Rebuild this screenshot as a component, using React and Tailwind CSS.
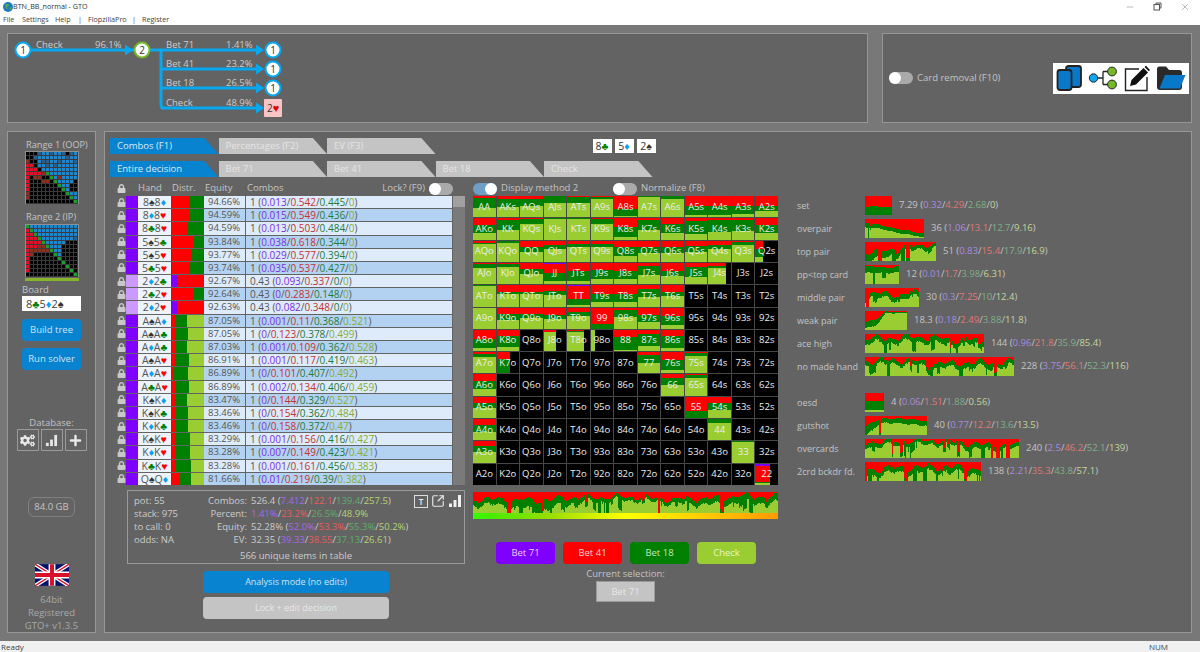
import { Minus, X, SquareArrowOutUpRight } from "lucide-react";
import { FaCogs, FaLock, FaPlus } from "react-icons/fa";

const PURPLE = "#8000ff";
const RED = "#ff0000";
const GREEN = "#008000";
const LIME = "#9acd32";

const SUIT_COLORS = { "♠": "#333333", "♦": "#0a9ff0", "♥": "#ff0000", "♣": "#008000" };

// hand, equity, total combos, then bet 71 / bet 41 / bet 18 / check
const TABLE_ROWS = [
  ["8♠8♦", "94.66%", "1", ["0.013", "0.542", "0.445", "0"]],
  ["8♦8♥", "94.59%", "1", ["0.015", "0.549", "0.436", "0"]],
  ["8♣8♥", "94.59%", "1", ["0.013", "0.503", "0.484", "0"]],
  ["5♠5♣", "93.84%", "1", ["0.038", "0.618", "0.344", "0"]],
  ["5♠5♥", "93.77%", "1", ["0.029", "0.577", "0.394", "0"]],
  ["5♣5♥", "93.74%", "1", ["0.035", "0.537", "0.427", "0"]],
  ["2♦2♣", "92.67%", "0.43", ["0.093", "0.337", "0", "0"]],
  ["2♣2♥", "92.64%", "0.43", ["0", "0.283", "0.148", "0"]],
  ["2♦2♥", "92.63%", "0.43", ["0.082", "0.348", "0", "0"]],
  ["A♠A♦", "87.05%", "1", ["0.001", "0.11", "0.368", "0.521"]],
  ["A♠A♣", "87.05%", "1", ["0", "0.123", "0.378", "0.499"]],
  ["A♦A♣", "87.03%", "1", ["0.001", "0.109", "0.362", "0.528"]],
  ["A♠A♥", "86.91%", "1", ["0.001", "0.117", "0.419", "0.463"]],
  ["A♦A♥", "86.89%", "1", ["0", "0.101", "0.407", "0.492"]],
  ["A♣A♥", "86.89%", "1", ["0.002", "0.134", "0.406", "0.459"]],
  ["K♠K♦", "83.47%", "1", ["0", "0.144", "0.329", "0.527"]],
  ["K♠K♣", "83.46%", "1", ["0", "0.154", "0.362", "0.484"]],
  ["K♦K♣", "83.46%", "1", ["0", "0.158", "0.372", "0.47"]],
  ["K♠K♥", "83.29%", "1", ["0.001", "0.156", "0.416", "0.427"]],
  ["K♦K♥", "83.28%", "1", ["0.007", "0.149", "0.423", "0.421"]],
  ["K♣K♥", "83.28%", "1", ["0.001", "0.161", "0.456", "0.383"]],
  ["Q♠Q♦", "81.66%", "1", ["0.01", "0.219", "0.39", "0.382"]],
];

// strategy matrix: [red, green, width, purple], null for hands not in range
const n = null;
const MATRIX = [
  [[.1, .45], [.15, .35], [.15, .3], [0, .35], [.05, .3], [.05, .1], [.6, .35], [.02, .05], [.02, .12], [.45, .45], [.45, .45], [.45, .4], [.45, .25]],
  [[.3, .4], [.1, .45], [.05, .2], [0, .05], [0, .05], [.05, .2], [.4, .5], [.1, .45], [.25, .45], [.15, .6], [.1, .55], [.1, .5], [.3, .4]],
  [[.1, .05], [0, .1], [.3, .25], [.2, .2], [.15, .15], [.15, .15], [.3, .4], [.3, .3], [.3, .3], [.25, .3], [.2, .2], [.05, .15], [.4, .35, .33]],
  [[.05, .2], [.05, .15], [.3, .2], [.45, .35, 1, .04], [.4, .45], [.35, .4], [.4, .35], [.15, .4], [.4, .2], [.2, .45], [.15, .1, .8], n, n],
  [[0, .05], [.3, .1], [.3, .1], [.25, .2], [.6, .3, 1, .04], [.4, .4], [.4, .4], [.2, .35], [.3, .2], n, n, n, n],
  [[0, 0], [.3, .3], [.3, .2], [.35, .2], [.2, .2], [.75, .25, 1, .03], [.1, .35], [.35, .35], [.4, .4], n, n, n, n],
  [[.45, .4], [.3, .5], n, [.1, 0, .55], [.05, .05, .75], [0, 0, .2], [.35, .6], [.2, .55], [.3, .55], n, n, n, n],
  [[.1, .15], [.3, .7, .6], n, n, n, n, n, [.15, .35], [.35, .5], [.02, .15], n, n, n],
  [[.3, .4], n, n, n, n, n, n, n, [.15, .35], [.02, .15], n, n, n],
  [[.3, .25], n, n, n, n, n, n, n, n, [.65, .35], [.3, .3], n, n],
  [[.3, .3], n, n, n, n, n, n, n, n, n, [0, .2], n, n],
  [[.2, .3], n, n, n, n, n, n, n, n, n, n, [0, .05], n],
  [n, n, n, n, n, n, n, n, n, n, n, n, [.75, .08, .65, .1]],
];
const RANKS = "AKQJT98765432";

const RANGE_COLORS = { k: "#000000", b: "#1f86cc", d: "#2d5f8c", r: "#e0102a", m: "#8a3020", g: "#1f9a30" };
const RANGE_1 = [
  "kkkdbbdbbdkdb", "kkdbbbbbbbdbb", "mkkbddbbdbbbd", "rrkbbdbdbbbbb", "rrrkbbbbbbbbb",
  "rrrrmgbbbbbbb", "rkmmkkgbmbbbb", "rkkkmmkgbbbbk", "rkkkkkkkgbbkk", "rkkkkkkkkgbkk",
  "mkkkkkkkkkgbb", "mkkkkkkkkkkgb", "kkkkkkkkkkkkg",
];
const RANGE_2 = [
  "gbbbbbbbbbbbb", "rgbbbbbbbbbbb", "rrgbbbbbbbbbb", "rrrgbbbbbbbbd", "rrrrgbbbbbkkk",
  "rrrmmgbbbkkkk", "rmmmmmgbbkkkk", "rmkkkkkgbkkkk", "rkkkkkkkgkkkk", "rkkkkkkkkgkkk",
  "rkkkkkkkkkgkk", "rkkkkkkkkkkgk", "kkkkkkkkkkkkg",
];

const CATEGORIES = [
  { name: "set", w: 27, red: [.56, .55, .6], green: [1, 1, 1], rough: .1, seed: 11, vals: ["7.29", "0.32", "4.29", "2.68", "0"] },
  { name: "overpair", w: 59, red: [.2, .35, .6, .75], green: [.45, .55, .8, .95], rough: .2, seed: 23, vals: ["36", "1.06", "13.1", "12.7", "9.16"] },
  { name: "top pair", w: 71, red: [.55, .5, .3, .2, .1], green: [1, .85, .55, .4, .3], rough: .9, seed: 37, vals: ["51", "0.83", "15.4", "17.9", "16.9"] },
  { name: "pp<top card", w: 34, red: [.1, .1, .1], green: [.45, .4, .4], rough: .3, seed: 41, vals: ["12", "0.01", "1.7", "3.98", "6.31"] },
  { name: "middle pair", w: 54, red: [.35, .3, .35, .2], green: [.55, .55, .6, .45], rough: 1.2, seed: 53, vals: ["30", "0.3", "7.25", "10", "12.4"] },
  { name: "weak pair", w: 42, red: [.55, .45, .05, .05, .05], green: [.85, .8, .12, .12, .1], rough: .2, seed: 67, vals: ["18.3", "0.18", "2.49", "3.88", "11.8"] },
  { name: "ace high", w: 119, red: [.25, .2, .15, .3, .3], green: [.5, .45, .4, .55, .55], rough: 1.1, seed: 71, vals: ["144", "0.96", "21.8", "35.9", "85.4"] },
  { name: "no made hand", w: 149, red: [.2, .15, .35, .3, .25], green: [.45, .35, .6, .55, .5], rough: 1.1, seed: 83, vals: ["228", "3.75", "56.1", "52.3", "116"] },
  { gap: true, name: "oesd", w: 19, red: [.4, .4], green: [.88, .88], rough: 0, seed: 97, vals: ["4", "0.06", "1.51", "1.88", "0.56"] },
  { name: "gutshot", w: 62, red: [.5, .15, .1, .2, .25], green: [1, .4, .35, .45, .5], rough: .3, seed: 101, vals: ["40", "0.77", "12.2", "13.6", "13.5"] },
  { name: "overcards", w: 154, red: [.15, .12, .08, .3, .3], green: [.4, .3, .25, .55, .5], rough: 1, seed: 113, vals: ["240", "2.5", "46.2", "52.1", "139"] },
  { name: "2crd bckdr fd.", w: 116, red: [.4, .3, .25, .35], green: [.7, .55, .5, .65], rough: 1.2, seed: 127, vals: ["138", "2.21", "35.3", "43.8", "57.1"] },
];

function lerpPoints(points, t) {
  const pos = t * (points.length - 1);
  const i = Math.min(Math.floor(pos), points.length - 2);
  return points[i] + (points[i + 1] - points[i]) * (pos - i);
}

// area chart of the strategy per hand, drawn one pixel column at a time
function Chart({ w, h = 19, red, green, rough = 0, seed = 1 }) {
  let s = seed * 7919;
  const rnd = () => {
    s = (s * 16807) % 2147483647;
    return s / 2147483647;
  };
  const p1 = rnd() * 6.28;
  const p2 = rnd() * 6.28;
  let redPath = "";
  let greenPath = "";
  let spike = 0;
  let left = 0;
  let redSpike = false;
  for (let x = 0; x < w; x++) {
    const t = x / Math.max(w - 1, 1);
    if (left === 0 && rnd() < rough * 0.13) {
      left = 1 + Math.floor(rnd() * 4);
      spike = rnd() * 0.8;
      redSpike = rnd() < 0.35;
    }
    const wave = (Math.sin(x / 5 + p1) + Math.sin(x / 2.3 + p2)) * rough * 0.09;
    const noise = (rnd() - 0.5) * rough * 0.08 + wave;
    const dip = left > 0 ? spike : 0;
    if (left > 0) left--;
    const r = Math.min(Math.max(lerpPoints(red, t) + noise + (redSpike ? dip : 0), 0), 1) * h;
    const g = Math.min(Math.max(lerpPoints(green, t) + noise + dip, 0), 1) * h;
    redPath += `M${x} 0h1V${r}h-1z`;
    greenPath += `M${x} ${r}h1V${Math.max(g, r)}h-1z`;
  }
  return (
    <svg width={w} height={h} className="block shrink-0" shapeRendering="crispEdges">
      <rect width={w} height={h} fill={LIME} />
      <path d={greenPath} fill={GREEN} />
      <path d={redPath} fill={RED} />
    </svg>
  );
}

function Suited({ text }) {
  return (
    <>
      {[...text].map((ch, i) => (
        <span key={i} style={SUIT_COLORS[ch] ? { color: SUIT_COLORS[ch] } : undefined}>
          {ch}
        </span>
      ))}
    </>
  );
}

function Toggle({ on }) {
  return (
    <div className={`w-[24px] h-[12px] rounded-full shrink-0 flex items-center ${on ? "bg-[#6d9fc7] justify-end" : "bg-[#aaaaaa] justify-start"}`}>
      <div className="w-[12px] h-[12px] rounded-full bg-white" />
    </div>
  );
}

function Tab({ label, active }) {
  return (
    <div
      className={`w-[108.5px] h-[16px] shrink-0 pl-[7px] leading-[16px] [clip-path:polygon(0_0,87%_0,100%_100%,0_100%)] ${
        active ? "bg-[#0883cf] text-[#d8ecf8]" : "bg-[#c4c4c4] text-[#e4e4e4]"
      }`}
    >
      {label}
    </div>
  );
}

function Panel({ className, children }) {
  return <div className={`bg-[#636363] border border-[#979797] ${className}`}>{children}</div>;
}

function BarsIcon({ size }) {
  return (
    <svg width={size} height={size} viewBox="0 0 14 14" fill="currentColor">
      <rect x="1" y="9.5" width="3" height="3.5" />
      <rect x="5.5" y="6" width="3" height="7" />
      <rect x="10" y="1" width="3" height="12" />
    </svg>
  );
}

function RangeGrid({ rows }) {
  return (
    <svg width="54" height="54" className="block" shapeRendering="crispEdges">
      <rect width="54" height="54" fill="#8f8f8f" />
      <rect x="1" y="1" width="52" height="52" fill="#3a3a3a" />
      {rows.map((row, y) =>
        [...row].map((c, x) => (
          <rect key={x} x={1 + x * 4} y={1 + y * 4} width="3.4" height="3.4" fill={RANGE_COLORS[c]} />
        ))
      )}
    </svg>
  );
}

function UnionJack() {
  return (
    <svg width="34" height="22" viewBox="0 0 60 38" className="block">
      <rect width="60" height="38" fill="#00106e" />
      <path d="M0 0L60 38M60 0L0 38" stroke="#fff" strokeWidth="7" />
      <path d="M0 0L60 38M60 0L0 38" stroke="#d8102a" strokeWidth="2.5" />
      <path d="M30 0V38M0 19H60" stroke="#fff" strokeWidth="12" />
      <path d="M30 0V38M0 19H60" stroke="#d8102a" strokeWidth="7" />
    </svg>
  );
}

function GlobeIcon() {
  return (
    <svg width="10" height="10" viewBox="0 0 10 10" className="shrink-0">
      <circle cx="5" cy="5" r="5" fill="#1f78c8" />
      <path d="M2 2.5L5 1.5L6 3.5L4 5L4.5 7.5L2.5 6ZM6.5 6L8.5 4.5L8.5 7L7 8.5Z" fill="#4fae3c" />
    </svg>
  );
}

function ToolIcons() {
  return (
    <div className="w-[136px] h-[31px] bg-white flex items-center justify-between px-[3px]">
      {/* cards */}
      <svg width="26" height="26" viewBox="0 0 26 26">
        <rect x="10" y="1" width="15" height="21" rx="2.5" fill="#0a78c8" stroke="#222" strokeWidth="1.8" />
        <rect x="1.5" y="5" width="14" height="20" rx="2.5" fill="#0a78c8" stroke="#222" strokeWidth="1.8" />
      </svg>
      {/* tree */}
      <svg width="30" height="26" viewBox="0 0 30 26">
        <path d="M8 13H15M15 6.5V19.5M15 6.5H20M15 19.5H20" stroke="#222" strokeWidth="1.3" fill="none" />
        <circle cx="5.5" cy="13" r="4.2" fill="#12a5ee" stroke="#222" strokeWidth="1" />
        <circle cx="24" cy="6.5" r="4.4" fill="#76b82a" stroke="#222" strokeWidth="1" />
        <circle cx="24" cy="19.5" r="4.4" fill="#76b82a" stroke="#222" strokeWidth="1" />
      </svg>
      {/* edit */}
      <svg width="26" height="27" viewBox="0 0 26 27">
        <path d="M15 4H1.5V25.5H23V12" stroke="#222" strokeWidth="1.4" fill="none" />
        <path d="M6 21L7.5 15L19.5 3L24 7.5L12 19.5Z" fill="#111" />
        <path d="M20.5 2L22 0.7L26 5L24.8 6.3Z" fill="#111" />
      </svg>
      {/* folder */}
      <svg width="30" height="26" viewBox="0 0 30 26">
        <path d="M1 4Q1 1.5 3.5 1.5H10L13 5H24Q26 5 26 7.5V22Q26 25 23 25H4Q1 25 1 22Z" fill="#2a2a2a" />
        <path d="M3.5 23.5L9 10H29.5L24 23.5Z" fill="#0a78c8" />
      </svg>
    </div>
  );
}

function TreeDiagram() {
  const line = "#08a8ee";
  const label = "#cccccc";
  const branches = [
    ["Bet 71", "1.41%", 50],
    ["Bet 41", "23.2%", 69],
    ["Bet 18", "26.5%", 88],
    ["Check", "48.9%", 108],
  ];
  const arrow = (x, y) => <path d={`M${x} ${y - 5.5}L${x + 8} ${y}L${x} ${y + 5.5}Z`} fill={line} />;
  const node = (x, y, text, ring) => (
    <g>
      <circle cx={x} cy={y} r="7.5" fill="#fff" stroke={ring} strokeWidth="2" />
      <text x={x} y={y + 3.5} textAnchor="middle" fontSize="10" fill="#333">
        {text}
      </text>
    </g>
  );
  return (
    <svg width="300" height="88" viewBox="8 34 300 88" className="block">
      <path d="M30 50H134" stroke={line} strokeWidth="3" />
      {arrow(125, 50)}
      <text x="36" y="48" fontSize="9.5" fill={label}>Check</text>
      <text x="95" y="48" fontSize="9.5" fill={label}>96.1%</text>
      <path d="M161 50V105Q161 108 164 108" stroke={line} strokeWidth="3" fill="none" />
      {branches.map(([name, pct, y]) => (
        <g key={name}>
          <path d={`M${y === 50 ? 150 : 161} ${y}H258`} stroke={line} strokeWidth="3" />
          {arrow(256, y)}
          <text x="166" y={y - 2} fontSize="9.5" fill={label}>{name}</text>
          <text x="226" y={y - 2} fontSize="9.5" fill={label}>{pct}</text>
        </g>
      ))}
      {node(23, 50, "1", line)}
      {node(142, 50, "2", "#76b82a")}
      {node(273, 50, "1", line)}
      {node(273, 69, "1", line)}
      {node(273, 88, "1", line)}
      <rect x="264" y="99" width="18" height="18" rx="1" fill="#f8c4c4" />
      <text x="267" y="112" fontSize="10" fill="#333">2<tspan fill="#e00000" fontSize="11">♥</tspan></text>
    </svg>
  );
}

function MatrixCell({ label, data }) {
  return (
    <div className="grid bg-black overflow-hidden">
      {data && (
        <div className="[grid-area:1/1] h-full flex flex-col bg-[#9acd32]" style={{ width: `${(data[2] ?? 1) * 100}%` }}>
          {data[3] && <div className="bg-[#8000ff]" style={{ height: `${data[3] * 100}%` }} />}
          <div className="bg-[#ff0000]" style={{ height: `${data[0] * 100}%` }} />
          <div className="bg-[#008000]" style={{ height: `${data[1] * 100}%` }} />
        </div>
      )}
      <div className="[grid-area:1/1] flex items-center justify-center text-[#eeeeee]">{label}</div>
    </div>
  );
}

function StrategyMatrix() {
  const cells = [];
  for (let r = 0; r < 13; r++) {
    for (let c = 0; c < 13; c++) {
      const label = r === c ? RANKS[r] + RANKS[c] : r < c ? `${RANKS[r]}${RANKS[c]}s` : `${RANKS[c]}${RANKS[r]}o`;
      cells.push(<MatrixCell key={label} label={label} data={MATRIX[r][c]} />);
    }
  }
  return (
    <div className="grid grid-cols-[repeat(13,1fr)] grid-rows-[repeat(13,1fr)] gap-px w-[305px] h-[289px] bg-[#474747]">
      {cells}
    </div>
  );
}

function TableRow({ row, index }) {
  const [hand, equity, combos, vals] = row;
  const nums = vals.map(Number);
  const total = nums.reduce((a, b) => a + b, 0);
  const colors = [PURPLE, RED, GREEN, LIME];
  const textColors = ["text-[#7a30e0]", "text-[#c83030]", "text-[#1f7a3a]", "text-[#86ad30]"];
  const light = index % 2 === 0;
  return (
    <div className="flex items-stretch min-h-0 text-[#555555]">
      <div className="w-[9px] shrink-0 flex items-center"><FaLock size={9} color="#c8c8c8" /></div>
      <div className={`w-[12px] shrink-0 ${combos === "1" ? "bg-[#8000ff]" : "bg-[#cc99ff]"}`} />
      <div className="w-[33px] shrink-0 bg-[#edf3fb] text-center text-[10.5px] leading-[12px]"><Suited text={hand} /></div>
      <div className="w-[33px] shrink-0 flex bg-[#636363]">
        {nums.map((v, i) => (
          <div key={i} style={{ width: `${(v / Math.max(total, 1 / 33)) * 100}%`, background: colors[i] }} />
        ))}
      </div>
      <div className={`flex-1 flex leading-[12px] ${light ? "bg-[#deebfa]" : "bg-[#b3d2f1]"}`}>
        <div className="w-[42px] shrink-0 pl-[4px] border-r border-[#666666]">{equity}</div>
        <div className="pl-[4px] whitespace-nowrap text-[10px]">
          {combos} (
          {vals.map((v, i) => (
            <span key={i}>
              <span className={textColors[i]}>{v}</span>
              {i < 3 ? "/" : ""}
            </span>
          ))}
          )
        </div>
      </div>
    </div>
  );
}

function SplitValues({ total, vals, colors }) {
  return (
    <span className="whitespace-nowrap">
      {total}
      {total ? " (" : ""}
      {vals.map((v, i) => (
        <span key={i}>
          <span className={colors[i]}>{v}</span>
          {i < 3 ? "/" : ""}
        </span>
      ))}
      {total ? ")" : ""}
    </span>
  );
}

const SOFT_COLORS = ["text-[#a98ae0]", "text-[#e07878]", "text-[#7fb08a]", "text-[#c4d69a]"];
const INFO_COLORS = ["text-[#a468ec]", "text-[#e85c5c]", "text-[#5fae6a]", "text-[#b4d472]"];

const INFO_ROWS = [
  ["pot: 55", "Combos:", "526.4", ["7.412", "122.1", "139.4", "257.5"]],
  ["stack: 975", "Percent:", "", ["1.41%", "23.2%", "26.5%", "48.9%"]],
  ["to call: 0", "Equity:", "52.28%", ["52.0%", "53.3%", "55.3%", "50.2%"]],
  ["odds: NA", "EV:", "32.35", ["39.33", "38.55", "37.13", "26.61"]],
];

function InfoBox() {
  return (
    <div className="relative w-[338px] h-[74px] ml-[10px] mt-[5px] border border-[#9a9a9a] pl-[6px] pt-[3px] leading-[13px] text-[#cccccc]">
      {INFO_ROWS.map(([left, name, total, vals]) => (
        <div key={name} className="flex h-[13px]">
          <div className="w-[60px]">{left}</div>
          <div className="w-[53px] text-right">{name}</div>
          <div className="ml-[4px]"><SplitValues total={total} vals={vals} colors={INFO_COLORS} /></div>
        </div>
      ))}
      <div className="text-center pr-[6px] mt-[3px]">566 unique items in table</div>
      <div className="absolute top-[3px] right-[2px] flex items-center gap-[3px] text-[#f0f0f0]">
        <div className="w-[14px] h-[13px] border border-[#dddddd] text-[8px] leading-[11px] text-center font-semibold">T</div>
        <SquareArrowOutUpRight size={14} strokeWidth={2} color="#e8e8e8" />
        <BarsIcon size={14} />
      </div>
    </div>
  );
}

function LeftColumn() {
  const dbButtons = [<FaCogs size={15} key="c" />, <BarsIcon size={13} key="s" />, <FaPlus size={13} key="p" />];
  return (
    <Panel className="w-[89px] h-[502px] flex flex-col items-center pt-[7px] text-[#c4c4c4]">
      <div className="self-start ml-[18px] leading-[12px] text-[9.2px] whitespace-nowrap">Range 1 (OOP)</div>
      <RangeGrid rows={RANGE_1} />
      <div className="self-start ml-[18px] leading-[12px] mt-[7px] mb-px text-[9.2px]">Range 2 (IP)</div>
      <RangeGrid rows={RANGE_2} />
      <div className="w-[54px] h-[3px] bg-[#86b52c] mt-px" />
      <div className="w-[59px] leading-[12px] mt-[3px]">Board</div>
      <div className="w-[59px] h-[15px] bg-white pl-[4px] text-[11px] leading-[15px] text-[#444444]"><Suited text="8♣5♦2♠" /></div>
      <div className="w-[59px] h-[22px] mt-[8px] rounded-sm bg-[#0883cf] text-[#cfe6f6] leading-[22px] text-center">Build tree</div>
      <div className="w-[59px] h-[22px] mt-[7px] rounded-sm bg-[#0883cf] text-[#cfe6f6] leading-[22px] text-center">Run solver</div>
      <div className="leading-[12px] mt-[47px]">Database:</div>
      <div className="flex gap-[2px]">
        {dbButtons.map((icon, i) => (
          <div key={i} className="w-[22px] h-[22px] border border-[#9a9a9a] flex items-center justify-center text-[#e8e8e8]">{icon}</div>
        ))}
      </div>
      <div className="w-[47px] h-[20px] mt-[46px] border border-[#808080] rounded-md leading-[18px] text-center">84.0 GB</div>
      <div className="mt-[47px]"><UnionJack /></div>
      <div className="mt-[7px] leading-[13px] text-center text-[#a8a8a8]">
        64bit
        <br />
        Registered
        <br />
        GTO+ v1.3.5
      </div>
    </Panel>
  );
}

function TableColumn() {
  return (
    <div className="w-[348px] shrink-0 ml-[12px]">
      <div className="flex items-center h-[15px] text-[#c4c4c4]">
        <div className="w-[21px]"><FaLock size={9} color="#d0d0d0" /></div>
        <div className="w-[34px]">Hand</div>
        <div className="w-[33px]">Distr.</div>
        <div className="w-[42px]">Equity</div>
        <div className="flex-1">Combos</div>
        <div className="mr-[4px]">Lock? (F9)</div>
        <div className="mr-[12px]"><Toggle /></div>
      </div>
      <div className="flex h-[289px]">
        <div className="w-[335px] grid grid-rows-[repeat(22,1fr)] gap-y-px">
          {TABLE_ROWS.map((row, i) => (
            <TableRow key={row[0]} row={row} index={i} />
          ))}
        </div>
        <div className="w-[12px] ml-px bg-[#7a7a7a]">
          <div className="h-[11px] bg-[#a0a0a0]" />
        </div>
      </div>
      <InfoBox />
      <div className="w-[186px] h-[22px] ml-[86px] mt-[7px] rounded-sm bg-[#0883cf] text-[#cfe6f6] text-[9px] leading-[22px] text-center">Analysis mode (no edits)</div>
      <div className="w-[186px] h-[22px] ml-[86px] mt-[4px] rounded-sm bg-[#c4c4c4] text-[#e8e8e8] text-[9px] leading-[22px] text-center">Lock + edit decision</div>
    </div>
  );
}

function MatrixColumn() {
  const actions = [
    ["Bet 71", "bg-[#8000ff]", "text-[#e8d0ff]"],
    ["Bet 41", "bg-[#ff0000]", "text-[#ffd8d8]"],
    ["Bet 18", "bg-[#008000]", "text-[#c0e8c0]"],
    ["Check", "bg-[#9acd32]", "text-[#e8f4c8]"],
  ];
  return (
    <div className="w-[305px] shrink-0 ml-[8px]">
      <div className="flex items-center h-[15px] text-[#c4c4c4]">
        <Toggle on />
        <div className="ml-[4px] w-[112px]">Display method 2</div>
        <Toggle />
        <div className="ml-[4px]">Normalize (F8)</div>
      </div>
      <StrategyMatrix />
      <div className="mt-[7px]">
        <Chart w={305} h={21} red={[.35, .35, .4, .25, .25, .25, .35, .3, .2, .25]} green={[.6, .65, .9, .5, .4, .4, .55, .6, .5, .55]} rough={1} seed={131} />
      </div>
      <div className="h-[6px] bg-[linear-gradient(90deg,#33ff00_0%,#44ee00_5%,#99dd00_25%,#ffff00_50%,#ffcc00_75%,#ff9900_100%)]" />
      <div className="flex gap-[8px] pl-[23px] mt-[23px]">
        {actions.map(([label, bg, fg]) => (
          <div key={label} className={`w-[59px] h-[22px] rounded-sm leading-[22px] text-center ${bg} ${fg}`}>{label}</div>
        ))}
      </div>
      <div className="text-center leading-[12px] mt-[4px] text-[#c4c4c4]">Current selection:</div>
      <div className="w-[59px] h-[21px] mx-auto mt-px bg-[#c4c4c4] border border-[#9a9a9a] text-[#e8e8e8] leading-[19px] text-center">Bet 71</div>
    </div>
  );
}

function CategoryColumn() {
  return (
    <div className="ml-[19px] pt-[15px] text-[#c4c4c4] whitespace-nowrap">
      {CATEGORIES.map((c) => (
        <div key={c.name} className={`flex items-center h-[19px] mb-[4px] ${c.gap ? "mt-[17px]" : ""}`}>
          <div className="w-[68px] shrink-0 text-[9px]">{c.name}</div>
          <Chart w={c.w} red={c.red} green={c.green} rough={c.rough} seed={c.seed} />
          <div className="ml-[7px]">
            <SplitValues total={c.vals[0]} vals={c.vals.slice(1)} colors={SOFT_COLORS} />
          </div>
        </div>
      ))}
    </div>
  );
}

function MainPanel() {
  const topTabs = ["Combos (F1)", "Percentages (F2)", "EV (F3)"];
  const decisionTabs = ["Entire decision", "Bet 71", "Bet 41", "Bet 18", "Check"];
  return (
    <Panel className="w-[1088px] h-[502px] pt-[6px] pl-[5px]">
      <div className="flex items-center h-[16px]">
        {topTabs.map((t, i) => (
          <Tab key={t} label={t} active={i === 0} />
        ))}
        <div className="flex gap-[3px] ml-[157px] text-[10.5px] text-[#333333]">
          {["8♣", "5♦", "2♠"].map((card) => (
            <div key={card} className="w-[19px] h-[14px] bg-white leading-[14px] text-center"><Suited text={card} /></div>
          ))}
        </div>
      </div>
      <div className="flex h-[16px] mt-[7px]">
        {decisionTabs.map((t, i) => (
          <Tab key={t} label={t} active={i === 0} />
        ))}
      </div>
      <div className="flex mt-[4px] ml-[-5px]">
        <TableColumn />
        <MatrixColumn />
        <CategoryColumn />
      </div>
    </Panel>
  );
}

export default function App() {
  return (
    <div className="w-[1200px] h-[652px] flex flex-col overflow-hidden bg-white text-[9.5px] font-['Open_Sans','Noto_Sans',sans-serif]">
      {/* Title bar */}
      <div className="h-[13px] flex items-center pl-[3px] text-[7.2px] text-[#333333]">
        <GlobeIcon />
        <span>BTN_BB_normal - GTO</span>
        <div className="ml-auto flex items-center gap-[18px] pr-[10px] text-[#555555]">
          <Minus size={10} strokeWidth={1} />
          <svg width="9" height="9" viewBox="0 0 9 9" fill="none" stroke="#555" strokeWidth="1"><rect x="1" y="2.5" width="5.5" height="5.5" /><path d="M3 2.5V1H8V6H6.5" /></svg>
          <X size={10} strokeWidth={1} />
        </div>
      </div>
      {/* Menu */}
      <div className="h-[12px] flex items-center pl-[3px] text-[7.2px] text-[#444444]">
        <span className="w-[19px]">File</span>
        <span className="w-[33px]">Settings</span>
        <span className="w-[23px]">Help</span>
        <span className="w-[10px]">|</span>
        <span className="w-[44px]">FlopzillaPro</span>
        <span className="w-[10px]">|</span>
        <span>Register</span>
      </div>
      {/* Window content */}
      <div className="flex-1 min-h-0 bg-[#787878] pl-[7px] pt-[8px]">
        <div className="flex gap-[14px] h-[90px]">
          <Panel className="w-[861px]">
            <TreeDiagram />
          </Panel>
          <Panel className="w-[310px] flex items-center pl-[6px] pr-[2px] text-[#c4c4c4]">
            <Toggle />
            <span className="ml-[4px]">Card removal (F10)</span>
            <div className="ml-auto"><ToolIcons /></div>
          </Panel>
        </div>
        <div className="flex gap-[8px] mt-[8px]">
          <LeftColumn />
          <MainPanel />
        </div>
      </div>
      {/* Status bar */}
      <div className="h-[11px] bg-[#f0f0f0] flex items-center pl-px text-[8px] text-[#444444]">
        <span>Ready</span>
        <span className="ml-auto mr-[32px]">NUM</span>
      </div>
    </div>
  );
}
